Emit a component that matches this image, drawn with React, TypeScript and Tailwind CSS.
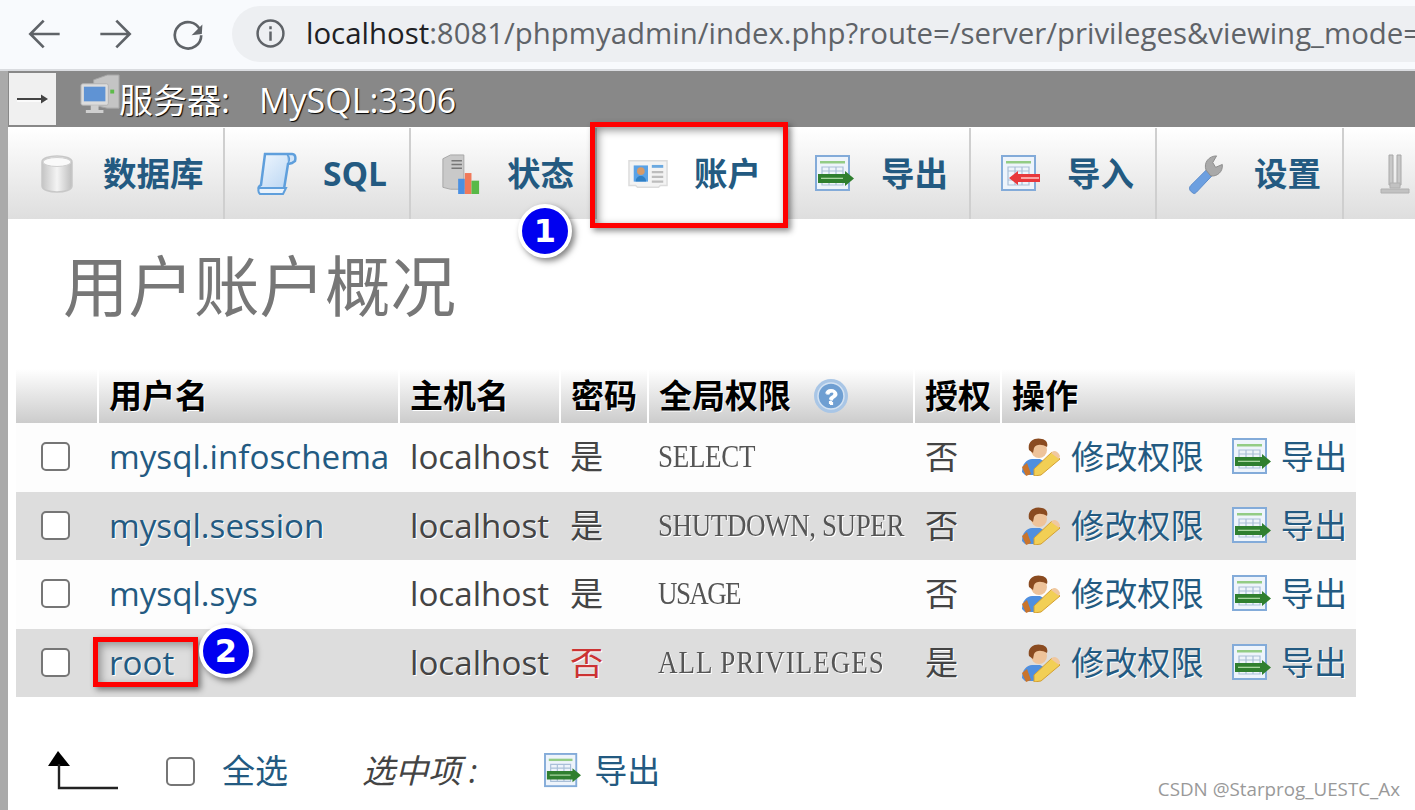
const SANS = "font-['Open_Sans','Noto_Sans_CJK_SC',sans-serif]";

const users = [
  { name: "mysql.infoschema", pass: "是", priv: "SELECT", track: "tracking-[-0.3px]", grant: "否" },
  { name: "mysql.session", pass: "是", priv: "SHUTDOWN, SUPER", track: "tracking-[-0.4px]", grant: "否" },
  { name: "mysql.sys", pass: "是", priv: "USAGE", track: "tracking-[-1.6px]", grant: "否" },
  { name: "root", pass: "否", priv: "ALL PRIVILEGES", track: "tracking-[1px]", grant: "是" },
];

function ExportIcon({ className = "w-10 h-[38px]" }: { className?: string }) {
  return (
    <svg viewBox="0 0 40 38" className={`${className} blur-[0.5px]`}>
      <rect x="1" y="1" width="33" height="34" fill="#eef4fb" stroke="#83abd9" strokeWidth="2" />
      <rect x="5" y="6" width="25" height="2.5" fill="#93cc85" />
      <path d="M7 12h21v18H7zM7 16h21M7 25h21M14 12v18M21 12v18" fill="none" stroke="#a9bfd8" strokeWidth="1.2" />
      <path d="M3 19h27v-3l9 7.5-9 7.5v-3H3z" fill="#2f7f2f" />
      <rect x="6" y="22.7" width="22" height="1.3" fill="#a8d6a0" />
    </svg>
  );
}

function ImportIcon() {
  return (
    <svg viewBox="0 0 40 38" className="w-10 h-[38px] blur-[0.5px]">
      <rect x="1" y="1" width="33" height="34" fill="#eef4fb" stroke="#83abd9" strokeWidth="2" />
      <rect x="5" y="6" width="25" height="2.5" fill="#93cc85" />
      <path d="M7 12h21v18H7zM7 16h21M7 25h21M14 12v18M21 12v18" fill="none" stroke="#a9bfd8" strokeWidth="1.2" />
      <path d="M39 19H17v-3l-9 7 9 7v-3h22z" fill="#e8383c" />
      <rect x="20" y="22" width="18" height="2" fill="#fba5a5" />
    </svg>
  );
}

function DbIcon() {
  return (
    <svg viewBox="0 0 40 40" className="w-10 h-10 blur-[0.5px]">
      <defs>
        <linearGradient id="db" x1="0" x2="1">
          <stop offset="0" stopColor="#c4c4c4" />
          <stop offset="0.5" stopColor="#f4f4f4" />
          <stop offset="1" stopColor="#bdbdbd" />
        </linearGradient>
      </defs>
      <path d="M5 8c0-8 30-8 30 0v24c0 8-30 8-30 0z" fill="url(#db)" stroke="#c8c8c8" strokeWidth="1.5" />
      <ellipse cx="20" cy="8" rx="14" ry="4.5" fill="#fafafa" stroke="#cfcfcf" />
    </svg>
  );
}

function SqlIcon() {
  return (
    <svg viewBox="0 0 40 44" className="w-10 h-11 blur-[0.5px]">
      <defs>
        <linearGradient id="sql" x1="0" x2="1" y1="0" y2="1">
          <stop offset="0" stopColor="#f0f7fe" />
          <stop offset="1" stopColor="#b5d3f2" />
        </linearGradient>
      </defs>
      <path d="M8 2h27c3 0 4 3 3 7l-3 2-4 1-4 25H2c-1-1 0-3 2-4z" fill="url(#sql)" stroke="#5f9fdc" strokeWidth="2.5" />
      <path d="M30 3c3 1 3 6 1 8" fill="#8fbbe6" stroke="#5f9fdc" strokeWidth="1.5" />
      <path d="M2 36h27l-3 6H3c-2-2-2-4-1-6z" fill="#eaf3fc" stroke="#5f9fdc" strokeWidth="2" />
    </svg>
  );
}

function StatusIcon() {
  return (
    <svg viewBox="0 0 42 42" className="w-[42px] h-[42px] blur-[0.5px]">
      <path d="M2 5l8-4h14v36H10l-8-2z" fill="#c9c9c9" stroke="#a5a5a5" />
      <path d="M11 7h11M11 11h11M11 15h11" stroke="#777" strokeWidth="1.5" />
      <rect x="18" y="26" width="7" height="16" fill="#4a90e2" />
      <rect x="25" y="20" width="7" height="22" fill="#f0795a" />
      <rect x="32" y="28" width="8" height="14" fill="#58b947" />
    </svg>
  );
}

function CardIcon() {
  return (
    <svg viewBox="0 0 42 30" className="w-[42px] h-[30px] blur-[0.5px]">
      <path d="M1 1h40v26h-7l-2 2H10l-2-2H1z" fill="#f3f3f3" stroke="#dcdcdc" strokeWidth="1.5" />
      <rect x="6" y="6" width="15" height="17" fill="#5aa2e6" />
      <circle cx="13.5" cy="12" r="4" fill="#d69a68" />
      <path d="M8 23c0-8 11-8 11 0z" fill="#2f7fc4" />
      <path d="M25 7h12" stroke="#6ba9e0" strokeWidth="3" />
      <path d="M25 13h12M25 18h12M25 23h12" stroke="#bdbdbd" strokeWidth="2.2" />
    </svg>
  );
}

function WrenchIcon() {
  return (
    <svg viewBox="0 0 42 42" className="w-[42px] h-[42px] blur-[0.5px]">
      <path d="M4 40c-3-2-3-5-1-7l17-17 6 6-17 18c-2 2-3 2-5 0z" fill="#6c9fe0" stroke="#5688c8" />
      <path d="M19 17c-3-8 3-15 11-15l-4 7 3 5 7-3c1 8-6 13-12 12z" fill="#a9a9a9" stroke="#8b8b8b" />
    </svg>
  );
}

function PluginIcon() {
  return (
    <svg viewBox="0 0 30 42" className="w-[30px] h-[42px] blur-[0.5px]">
      <path d="M9 2h4v30H9zM17 2h4v30h-4z" fill="#c8c8c8" stroke="#a8a8a8" />
      <path d="M10 30h10v5H10zM1 36h28v4H1z" fill="#c2c2c2" stroke="#b0b0b0" />
    </svg>
  );
}

function ServerIcon() {
  return (
    <svg viewBox="0 0 42 42" className="w-[41px] h-[41px] blur-[0.5px]">
      <path d="M14 6l14-5h12v34H28l-14-3z" fill="#c4c4c4" stroke="#a5a5a5" />
      <rect x="31" y="16" width="4" height="4" fill="#5dbb4a" />
      <rect x="1" y="10" width="28" height="22" rx="2" fill="#dcdcdc" stroke="#b2b2b2" />
      <rect x="4" y="13" width="22" height="15" fill="#5f93d4" />
      <path d="M11 32h8v5h5v3H6v-3h5z" fill="#cfcfcf" />
    </svg>
  );
}

function UserEditIcon() {
  return (
    <svg viewBox="0 0 40 38" className="w-10 h-[38px] shrink-0 blur-[0.5px]">
      <path d="M1 34c0-8 5-13 10-13h8l7 4-9 12H4z" fill="#4f8fdf" />
      <path d="M1 29l5-4 4 11-5 2z" fill="#c9742c" />
      <circle cx="18" cy="12" r="8" fill="#eec39a" />
      <path d="M8 12C6 3 14-1 21 1c5 1 6 5 5 8-5-3-11-3-13 1l-1 5z" fill="#8a4b20" />
      <path d="M13 31L31 14l8 7-19 16-7 1z" fill="#f2cf55" stroke="#d39f32" />
      <path d="M31 14c2-2 6-1 8 4l-1 3-8-6z" fill="#f0c8a0" />
    </svg>
  );
}

function HelpIcon() {
  return (
    <svg viewBox="0 0 36 36" className="w-9 h-9 blur-[0.4px]">
      <circle cx="18" cy="18" r="17" fill="#a9c6e6" />
      <circle cx="18" cy="18" r="13" fill="#6f9fd2" stroke="#d3e2f2" strokeWidth="1.5" />
      <text x="18" y="26" textAnchor="middle" fontSize="22" fontWeight="700" fill="#fff" fontFamily="Liberation Sans">?</text>
    </svg>
  );
}

function Check() {
  return <div className="w-[29px] h-[29px] rounded-[5px] border-[2.5px] border-[#767676] bg-white" />;
}

function Badge({ n, className }: { n: number; className: string }) {
  return (
    <div className={`absolute z-20 w-[54px] h-[54px] rounded-full border-[4px] border-white bg-[#0000f0] shadow-[3px_3px_6px_rgba(0,0,0,0.5)] flex items-center justify-center text-white text-[32px] font-bold font-['DejaVu_Sans',sans-serif] [text-shadow:none] ${className}`}>
      {n}
    </div>
  );
}

function Tab({ icon, label, className }: { icon: React.ReactNode; label: string; className: string }) {
  return (
    <div className={`relative h-full shrink-0 flex items-center gap-[26px] border-r-2 border-[#cfcfcf] bg-gradient-to-b from-white to-[#dedede] ${className}`}>
      <div className="w-10 flex justify-center">{icon}</div>
      <span className="text-[33.5px] font-bold text-[#235a81] whitespace-nowrap">{label}</span>
    </div>
  );
}

const colClass = "grid grid-cols-[83px_301px_161px_88px_266px_87px_353px] w-[1340px]";

export default function App() {
  return (
    <div className={`relative w-[1415px] h-[810px] overflow-hidden bg-white ${SANS}`}>
      {/* browser chrome */}
      <div className="h-[71px] pb-[2px] bg-[#f8fafd] flex items-center pl-[25px] gap-[30px] border-b-2 border-[#dadce0]">
        <svg viewBox="0 0 30 30" className="w-[40px] h-[40px]" fill="none" stroke="#5f6368" strokeWidth="2">
          <path d="M26 15H4M14 5L4 15l10 10" />
        </svg>
        <svg viewBox="0 0 30 30" className="w-[40px] h-[40px]" fill="none" stroke="#5f6368" strokeWidth="2">
          <path d="M4 15h22M16 5l10 10-10 10" />
        </svg>
        <svg viewBox="0 0 30 30" className="w-[36px] h-[36px] ml-[5px]" fill="none" stroke="#5f6368" strokeWidth="2.2">
          <path d="M25 11.5A11 11 0 1 0 26 16" />
          <path d="M18 16l8.5-1 .5-8z" fill="#5f6368" stroke="none" />
        </svg>
        <div className="flex-1 h-[56px] ml-[-4px] rounded-l-[28px] bg-[#edeff2] flex items-center pl-[23px] gap-[20px] min-w-0 overflow-hidden">
          <svg viewBox="0 0 30 30" className="w-[31px] h-[31px] shrink-0" fill="none" stroke="#5f6368" strokeWidth="2.4">
            <circle cx="15" cy="15" r="12.5" />
            <path d="M15 13v9M15 8v3" />
          </svg>
          <span className="text-[29.4px] whitespace-nowrap text-[#5f6368]">
            <span className="text-[#202124]">localhost</span>:8081/phpmyadmin/index.php?route=/server/privileges&amp;viewing_mode=s
          </span>
        </div>
      </div>

      <div className="border-l-[8px] border-[#aaaaaa] h-[739px]">
        {/* server bar */}
        <div className="h-[56px] bg-[#888888] flex items-center pl-[1px]">
          <div className="w-[47px] h-[52px] bg-[#f0f0f0] flex items-center justify-center">
            <svg viewBox="0 0 32 12" className="w-[32px] h-[12px]">
              <path d="M0 6.5h30" stroke="#fff" strokeWidth="1.5" transform="translate(0 1.5)" />
              <path d="M0 6h29" stroke="#444" strokeWidth="2" />
              <path d="M24 1.5L31 6l-7 4.5z" fill="#444" />
            </svg>
          </div>
          <div className="ml-[24px] -mt-[9px]"><ServerIcon /></div>
          <span className="text-[34px] mt-[3px] text-white [text-shadow:1px_1px_1px_#000] whitespace-nowrap -ml-[2px]">服务器:</span>
          <span className="text-[34px] mt-[3px] text-white [text-shadow:1px_1px_1px_#000] whitespace-nowrap ml-[29px]">MySQL:3306</span>
        </div>

        {/* nav tabs */}
        <div className="h-[91px] mt-[1px] flex items-stretch relative">
          <Tab icon={<DbIcon />} label="数据库" className="w-[217px] pl-[29px]" />
          <Tab icon={<SqlIcon />} label="SQL" className="w-[186px] pl-[32px]" />
          <Tab icon={<StatusIcon />} label="状态" className="w-[186px] pl-[30px]" />
          <div className="relative h-full w-[186px] shrink-0 flex items-center pl-[31px] gap-[26px] bg-white">
            <div className="w-10 flex justify-center"><CardIcon /></div>
            <span className="text-[33.5px] font-bold text-[#235a81]">账户</span>
            <div className="absolute left-[-7px] top-[-6px] w-[198px] h-[106px] border-[5px] border-[#ff0000] shadow-[3px_3px_6px_rgba(0,0,0,0.45),inset_3px_3px_8px_rgba(0,0,0,0.45)] z-10" />
          </div>
          <Tab icon={<ExportIcon />} label="导出" className="w-[188px] pl-[32px]" />
          <Tab icon={<ImportIcon />} label="导入" className="w-[186px] pl-[30px]" />
          <Tab icon={<WrenchIcon />} label="设置" className="w-[187px] pl-[31px]" />
          <div className="flex-1 flex items-center pl-[36px] bg-gradient-to-b from-white to-[#dedede]"><PluginIcon /></div>
          <Badge n={1} className="left-[510px] top-[76px]" />
        </div>

        {/* page title */}
        <h2 className="ml-[55px] mt-[29px] text-[65.5px] leading-[76px] text-[#777777] font-normal">用户账户概况</h2>

        {/* table */}
        <div className="ml-[8px] mt-[45px] w-[1340px]">
          <div className={`${colClass} h-[54px] text-[33px] font-bold text-black [text-shadow:1px_1px_0_#fff]`}>
            {["", "用户名", "主机名", "密码", "全局权限", "授权", "操作"].map((h, i) => (
              <div key={i} className="flex items-center gap-[22px] pl-[10px] mr-[2px] last:mr-0 whitespace-nowrap bg-gradient-to-b from-white to-[#cccccc]">
                {h}
                {h === "全局权限" && <HelpIcon />}
              </div>
            ))}
          </div>
          {users.map((u, i) => {
            const even = i % 2 === 1;
            return (
              <div key={u.name} className={`${colClass} h-[68.5px] items-center text-[33.2px] text-[#444] ${even ? "bg-[#dddddd] [text-shadow:1px_1px_0_#fff]" : "bg-[#fdfdfd]"}`}>
                <div className="pl-[25px] -mt-[1px]"><Check /></div>
                <div className="relative pl-[10px] text-[#235a81]">
                  {u.name}
                  {u.name === "root" && (
                    <>
                      <div className="absolute left-[-6px] top-[-1px] w-[105px] h-[50px] border-[5px] border-[#ff0000] shadow-[3px_3px_6px_rgba(0,0,0,0.45),inset_3px_3px_8px_rgba(0,0,0,0.35)]" />
                      <Badge n={2} className="left-[100px] top-[-14px]" />
                    </>
                  )}
                </div>
                <div className="pl-[10px]">localhost</div>
                <div className={`pl-[9px] ${u.pass === "否" ? "text-[#cc3333]" : ""}`}>{u.pass}</div>
                <div className={`pl-[9px] text-[27px] whitespace-pre font-['Liberation_Serif',serif] text-[#555] ${u.track}`}>
                  <span className="inline-block origin-center scale-y-[1.15]">{u.priv}</span>
                </div>
                <div className="pl-[10px]">{u.grant}</div>
                <div className="pl-[19px] flex items-center text-[#235a81] whitespace-nowrap">
                  <UserEditIcon />
                  <span className="ml-[10px]">修改权限</span>
                  <span className="ml-[28px]"><ExportIcon /></span>
                  <span className="ml-[9px]">导出</span>
                </div>
              </div>
            );
          })}
        </div>

        {/* footer actions */}
        <div className="ml-[40px] mt-[46px] flex items-center h-[56px]">
          <svg viewBox="0 0 70 40" className="w-[70px] h-[40px] -mt-[3px]">
            <path d="M0 15L10 0l12 15z" fill="#000" transform="translate(0 1)" />
            <path d="M11 14v24h59" fill="none" stroke="#222" strokeWidth="2.4" />
          </svg>
          <div className="ml-[48px]"><Check /></div>
          <span className="ml-[27px] text-[33px] text-[#235a81]">全选</span>
          <span className="ml-[74px] text-[33px] italic text-[#444]">选中项<span className="ml-[8px]">:</span></span>
          <span className="ml-[67px]"><ExportIcon className="w-[38px] h-[36px]" /></span>
          <span className="ml-[12px] text-[33px] text-[#235a81]">导出</span>
        </div>
      </div>

      <div className="absolute right-[15px] bottom-[7px] text-[18.8px] text-[#999999]">CSDN @Starprog_UESTC_Ax</div>
    </div>
  );
}
